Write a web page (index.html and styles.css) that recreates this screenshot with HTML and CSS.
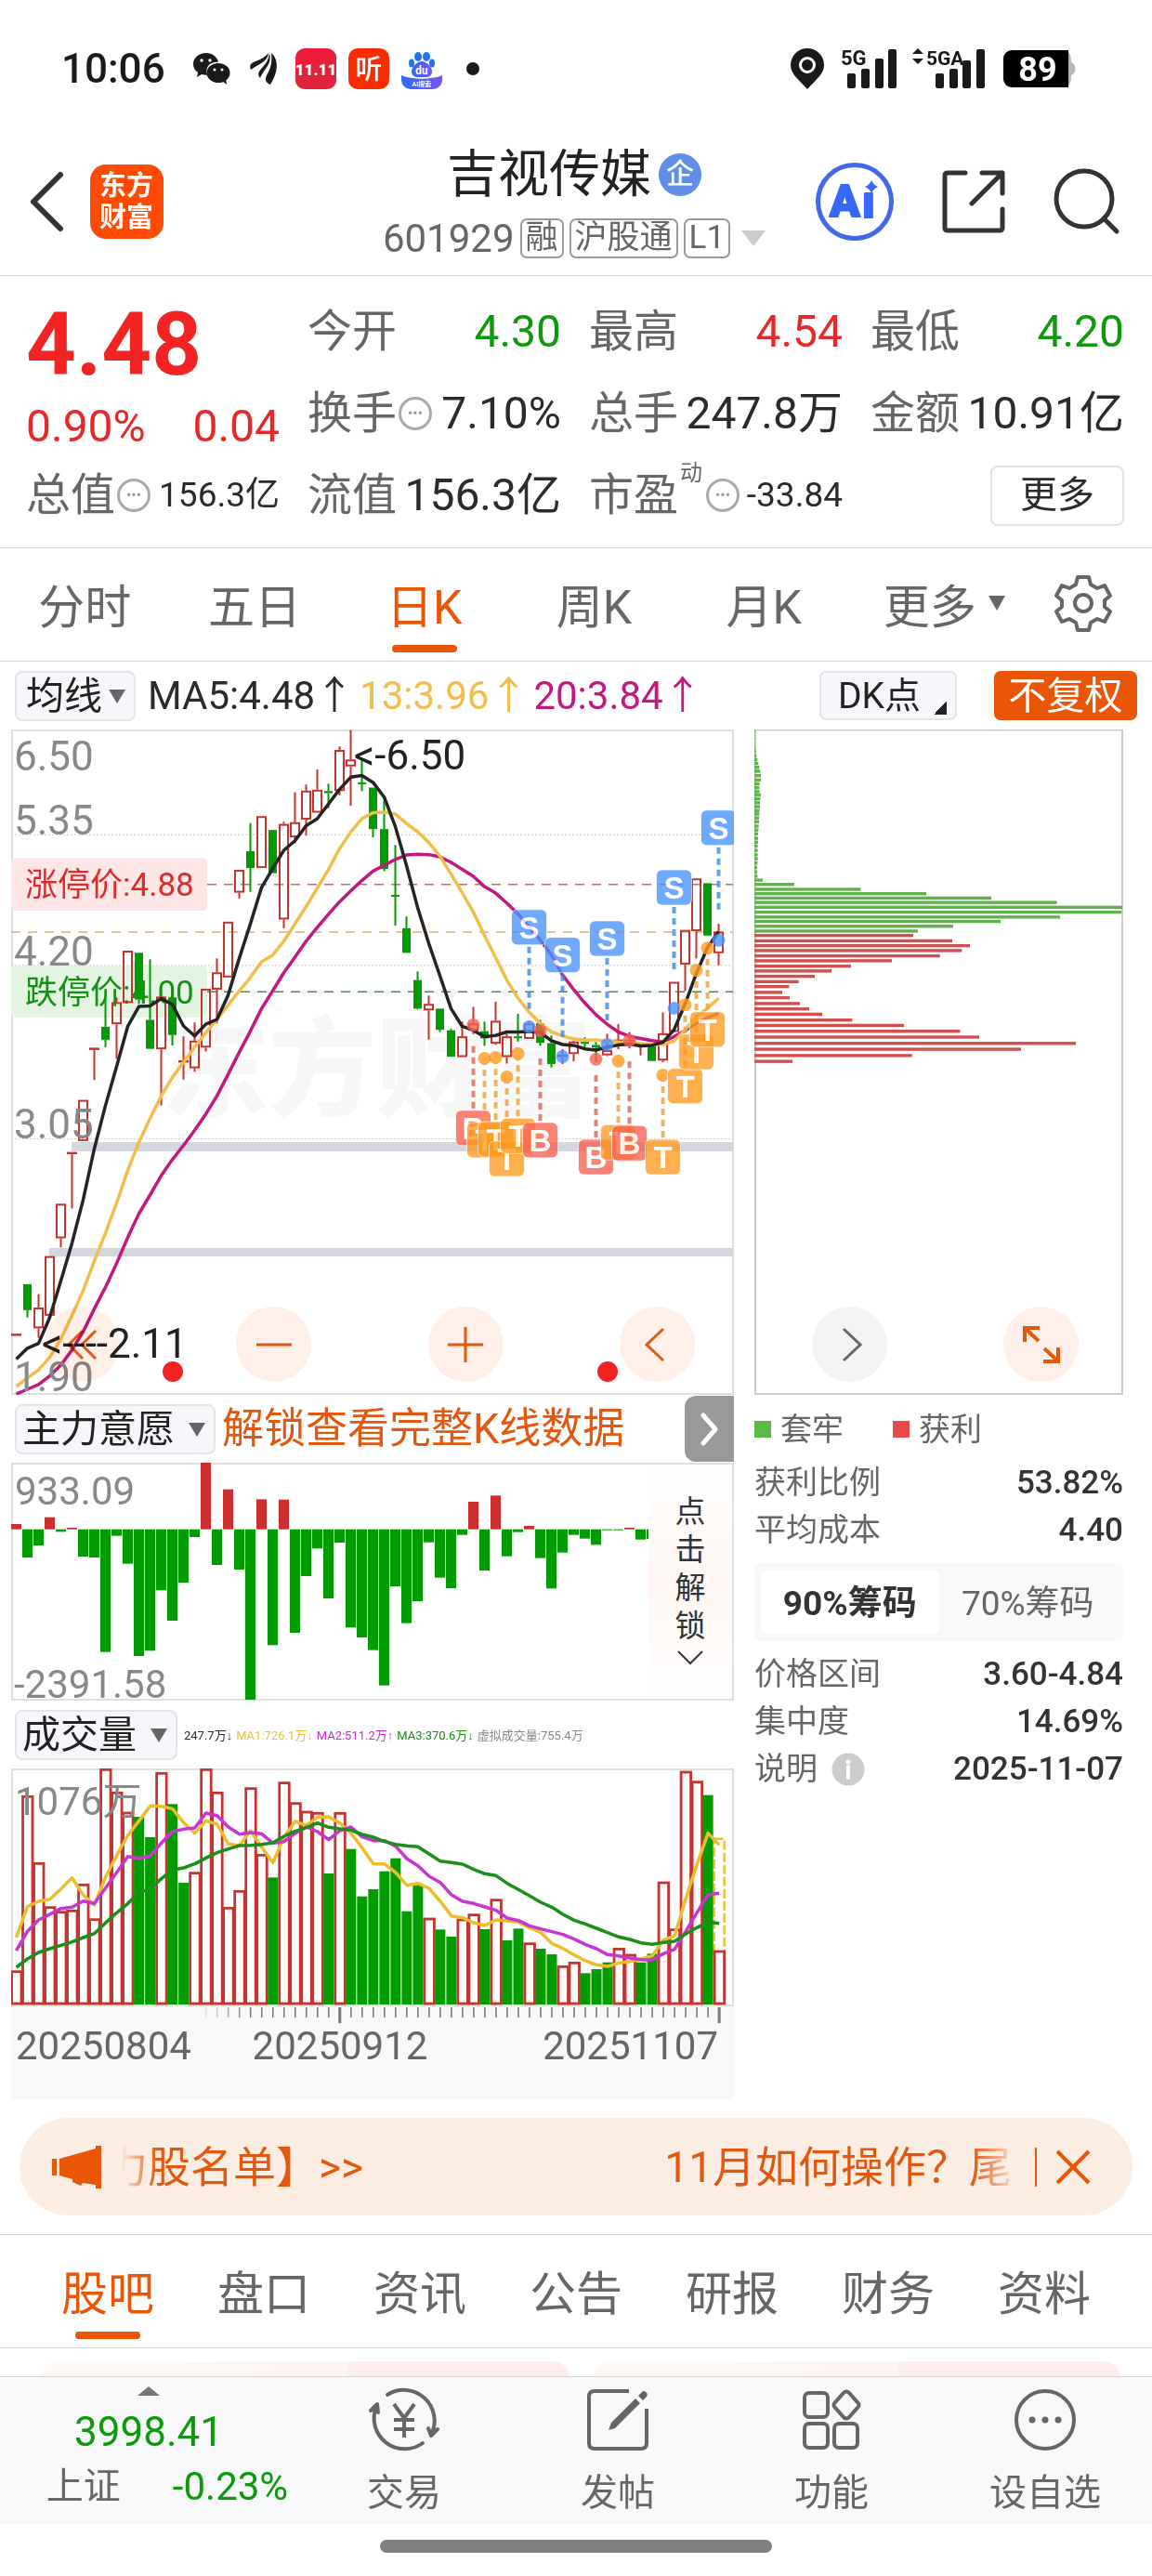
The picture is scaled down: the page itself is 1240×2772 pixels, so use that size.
FILE: index.html
```html
<!DOCTYPE html>
<html lang="zh-CN">
<head>
<meta charset="utf-8">
<meta name="viewport" content="width=device-width, initial-scale=1">
<title>吉视传媒 601929</title>
<link rel="stylesheet" href="styles.css">
<script src="charts.js" defer></script>
</head>
<body>
<div class="status">
  <span class="status-time">10:06</span>
  <svg class="st-wechat" width="40" height="34" viewBox="0 0 40 34"><path fill="#1a1a1a" d="M14 0C6 0 0 5 0 12c0 4 2 7 5 9l-1 5 5-3c2 .6 4 .8 6 .7C12 14 20 9 27 10 26 4 20 0 14 0z"/><ellipse cx="27" cy="21.500" rx="12.500" ry="10.500" fill="#1a1a1a"/><path fill="#1a1a1a" d="M31 30l5 4-1-6z"/><g fill="#fff"><circle cx="9" cy="8" r="1.700"/><circle cx="18" cy="8" r="1.700"/><circle cx="23" cy="18" r="1.500"/><circle cx="31" cy="18" r="1.500"/></g></svg>
  <svg class="st-wing" width="30" height="36" viewBox="0 0 30 36"><g fill="#1a1a1a"><path d="M1 19C-1 14 1 12 6 10 12 8 17 5 20 1 19 11 9 13 1 19z"/><path d="M11 28c-3-4-2-6 1-10 5-5 8-9 9-17 3 12-5 16-10 27z"/><path d="M22 35c-5-2-6-5-4-10C23 17 24 10 23 1c7 6 9 18-1 34z"/></g></svg>
  <svg class="st-app" width="44" height="44" viewBox="0 0 44 44"><rect width="44" height="44" rx="10" fill="#ee1c3a"/><path d="M0 26l44-20v28a10 10 0 0 1-10 10H10A10 10 0 0 1 0 34z" fill="#d8283c" opacity=".5"/><text x="22" y="29" text-anchor="middle" font-size="17" font-weight="900" fill="#fff">11.11</text></svg>
  <svg class="st-app" width="44" height="44" viewBox="0 0 44 44"><rect width="44" height="44" rx="10" fill="#fb2c02"/><text x="22" y="33" text-anchor="middle" font-size="29" font-weight="500" fill="#fff">听</text></svg>
  <svg class="st-app" width="44" height="44" viewBox="0 0 44 44"><defs><linearGradient id="du"><stop offset="0" stop-color="#2e6bf0"/><stop offset="1" stop-color="#7b55ee"/></linearGradient></defs><g fill="#1f74f2"><ellipse cx="18" cy="9" rx="4" ry="5"/><ellipse cx="27" cy="9" rx="4" ry="5"/><ellipse cx="11" cy="16" rx="3" ry="4.500"/><ellipse cx="33" cy="16" rx="3" ry="4.500"/></g><path fill="url(#du)" d="M22 14c-5 0-11 6-11 11 0 4 3 6 7 6h8c4 0 7-2 7-6 0-5-6-11-11-11z"/><path fill="url(#du)" d="M0 29c12 5 32 5 44 0v5a10 10 0 0 1-10 10H10A10 10 0 0 1 0 34z"/><text x="22" y="28" text-anchor="middle" font-size="12" font-weight="700" fill="#fff">du</text><text x="22" y="41" text-anchor="middle" font-size="7" font-weight="700" fill="#fff">AI搜索</text></svg>
  <span class="st-dot"></span>
  <span class="spacer"></span>
  <svg class="st-pin" width="36" height="44" viewBox="0 0 36 44"><path fill="#1a1a1a" d="M18 0a18 18 0 0 0-18 18c0 9 7 14 18 26 11-12 18-17 18-26A18 18 0 0 0 18 0z"/><circle cx="18" cy="18" r="7.500" fill="#1a1a1a" stroke="#fff" stroke-width="3"/></svg>
  <svg class="st-sig" width="60" height="46" viewBox="0 0 60 46"><text x="0" y="19" font-size="22" font-weight="700" fill="#1a1a1a">5G</text><g fill="#1a1a1a"><rect x="7" y="28" width="9" height="16" rx="2"/><rect x="22" y="23" width="9" height="21" rx="2"/><rect x="37" y="12" width="9" height="32" rx="2"/><rect x="51" y="2" width="9" height="42" rx="2"/></g></svg>
  <svg class="st-sig2" width="78" height="46" viewBox="0 0 78 46"><path fill="#1a1a1a" d="M0 7l6-6 6 6zM0 12h12l-6 6z"/><text x="15" y="19" font-size="21" font-weight="700" fill="#1a1a1a">5GA</text><g fill="#1a1a1a"><rect x="25" y="28" width="9" height="16" rx="2"/><rect x="40" y="23" width="9" height="21" rx="2"/><rect x="54" y="14" width="9" height="30" rx="2"/><rect x="69" y="2" width="9" height="42" rx="2"/></g></svg>
  <svg class="st-bat" width="78" height="40" viewBox="0 0 78 40"><path fill="#b5b5b5" d="M60 0h4c7 0 9 4 9 13 6 2 6 12 0 14 0 9-2 13-9 13h-4z"/><path d="M9 0h61v40H9a9 9 0 0 1-9-9V9a9 9 0 0 1 9-9z"/><text x="37" y="33" text-anchor="middle" font-size="36" font-weight="700" fill="#fff">89</text></svg>
</div>

<header class="head">
  <div class="head-side">
    <button class="icon-btn" aria-label="返回"><svg width="40" height="64" viewBox="0 0 40 64"><path d="M35 3L6 32l29 29" fill="none" stroke="#333" stroke-width="6" stroke-linecap="round" stroke-linejoin="round"/></svg></button>
    <svg class="logo" width="79" height="80" viewBox="0 0 79 80"><rect width="79" height="80" rx="17" fill="#ff4a05"/><g font-size="29" font-weight="700" fill="#fff" text-anchor="middle"><text x="39" y="33">东方</text><text x="39" y="67">财富</text></g></svg>
  </div>
  <div class="head-title">
    <h1>吉视传媒<span class="qi">企</span></h1>
    <div class="code">601929<span class="tag">融</span><span class="tag">沪股通</span><span class="tag">L1</span><i class="tri tri-code"></i></div>
  </div>
  <div class="head-side head-right">
    <button class="icon-btn" aria-label="AI助手"><svg width="84" height="84" viewBox="0 0 84 84"><circle cx="42" cy="42" r="39.500" fill="none" stroke="#4169ea" stroke-width="5"/><g font-size="48" font-weight="900" fill="#3568fb" stroke="#3568fb" stroke-width="2" stroke-linejoin="round"><text x="15" y="58">A</text><text x="50" y="59">ı</text></g><path fill="#3568fb" d="M60 19q2 5 7 7-5 2-7 7-2-5-7-7 5-2 7-7z"/></svg></button>
    <button class="icon-btn" aria-label="分享"><svg width="68" height="68" viewBox="0 0 68 68"><path d="M25 3H6q-3 0-3 3v56q0 3 3 3h56q3 0 3-3V42M43 3h22v22M65 3L32 36" fill="none" stroke="#333" stroke-width="5" stroke-linecap="round" stroke-linejoin="round"/></svg></button>
    <button class="icon-btn" aria-label="搜索"><svg width="72" height="72" viewBox="0 0 72 72"><circle cx="33" cy="33" r="30" fill="none" stroke="#333" stroke-width="5"/><path d="M54 54l14 14" stroke="#333" stroke-width="5" stroke-linecap="round"/></svg></button>
  </div>
</header>

<section class="quote">
  <div class="q price up">4.48</div>
  <div class="q"><span>今开</span><b class="down">4.30</b></div>
  <div class="q"><span>最高</span><b class="up">4.54</b></div>
  <div class="q"><span>最低</span><b class="down">4.20</b></div>
  <div class="q change up"><b>0.90%</b><b>0.04</b></div>
  <div class="q"><span>换手</span><i class="dots">•••</i><b>7.10%</b></div>
  <div class="q"><span>总手</span><b>247.8万</b></div>
  <div class="q"><span>金额</span><b>10.91亿</b></div>
  <div class="q"><span>总值</span><i class="dots">•••</i><b class="small">156.3亿</b></div>
  <div class="q"><span>流值</span><b>156.3亿</b></div>
  <div class="q"><span>市盈</span><sup>动</sup><i class="dots">•••</i><b class="small">-33.84</b></div>
  <div class="q"><button class="more">更多</button></div>
</section>

<nav class="periods">
  <button>分时</button>
  <button>五日</button>
  <button class="on">日K</button>
  <button>周K</button>
  <button>月K</button>
  <button>更多<i class="tri tri-tab"></i></button>
  <button aria-label="设置"><svg width="62" height="62" viewBox="0 0 62 62"><g fill="none" stroke="#666" stroke-width="4" stroke-linejoin="round"><path d="M25 3h12l2 8 7 4 8-3 6 11-6 5v7l6 5-6 11-8-3-7 4-2 8H25l-2-8-7-4-8 3L2 40l6-5v-7l-6-5 6-11 8 3 7-4z"/><circle cx="31" cy="31" r="9"/></g></svg></button>
</nav>

<div class="ma-row">
  <label class="pick"><select aria-label="主图指标"><option>均线</option></select></label>
  <span class="ma5">MA5:4.48↑</span><span class="ma13">13:3.96↑</span><span class="ma20">20:3.84↑</span>
  <span class="spacer"></span>
  <button class="dk">DK点<i></i></button>
  <button class="adjust">不复权</button>
</div>

<main class="charts">
  <div class="col">
    <div class="stage">
      <svg id="kline" viewBox="12 785 778 716"></svg>
      <div class="tools tools-left">
        <button aria-label="最早"><svg width="40" height="40" viewBox="0 0 40 40"><path d="M20 5L5 20l15 15M34 5L19 20l15 15"/></svg></button>
        <button aria-label="缩小"><svg width="40" height="40" viewBox="0 0 40 40"><path d="M1 20h38"/></svg></button>
        <button aria-label="放大"><svg width="40" height="40" viewBox="0 0 40 40"><path d="M1 20h38M20 1v38"/></svg></button>
        <button aria-label="向左"><svg width="40" height="40" viewBox="0 0 40 40"><path d="M27 3L9 20l18 17"/></svg></button>
      </div>
    </div>
    <div class="sub-row">
      <label class="pick pick-wide"><select aria-label="副图指标"><option>主力意愿</option></select></label>
      <a class="unlock" href="#">解锁查看完整K线数据</a>
      <button class="drawer" aria-label="展开"><svg width="24" height="36" viewBox="0 0 24 36"><path d="M5 3l13 15L5 33" fill="none" stroke="#fff" stroke-width="5" stroke-linecap="round" stroke-linejoin="round"/></svg></button>
    </div>
    <div class="stage">
      <svg id="force" viewBox="12 1574 778 256"></svg>
      <button class="veil"><span>点<br>击<br>解<br>锁</span><svg width="28" height="16" viewBox="0 0 28 16"><path d="M1 1l13 13L27 1" fill="none" stroke="#333" stroke-width="2"/></svg></button>
    </div>
    <div class="sub-row">
      <label class="pick pick-wide"><select aria-label="量能指标"><option>成交量</option></select></label>
      <p class="vol-info"><span class="c-ink">247.7万↓</span><span class="c-y">MA1:726.1万↓</span><span class="c-m">MA2:511.2万↑</span><span class="c-g">MA3:370.6万↓</span><span class="c-s">虚拟成交量:755.4万</span></p>
    </div>
    <svg id="volume" viewBox="12 1903 778 356"></svg>
  </div>
  <div class="col">
    <div class="stage">
      <svg id="chips" viewBox="811 785 397 716"></svg>
      <div class="tools tools-right">
        <button class="gray" aria-label="向右"><svg width="40" height="40" viewBox="0 0 40 40"><path d="M13 3l18 17-18 17"/></svg></button>
        <button class="zoom" aria-label="全屏"><svg width="40" height="40" viewBox="0 0 40 40"><path d="M2 17V2h16M2 2l15 14M38 23v15H22M38 38L23 24"/></svg></button>
      </div>
    </div>
    <div class="legend"><span class="trap">套牢</span><span class="gain">获利</span></div>
    <dl class="stats">
      <div><dt>获利比例</dt><dd>53.82%</dd></div>
      <div><dt>平均成本</dt><dd>4.40</dd></div>
    </dl>
    <div class="switch"><button class="on">90%筹码</button><button>70%筹码</button></div>
    <dl class="stats">
      <div><dt>价格区间</dt><dd>3.60-4.84</dd></div>
      <div><dt>集中度</dt><dd>14.69%</dd></div>
      <div><dt>说明<svg width="36" height="36" viewBox="0 0 36 36"><circle cx="18" cy="18" r="17.500" fill="#ccc"/><circle cx="18" cy="10" r="2.500" fill="#fff"/><path d="M18 15v12" stroke="#fff" stroke-width="4" stroke-linecap="round"/></svg></dt><dd>2025-11-07</dd></div>
    </dl>
  </div>
</main>

<aside class="notice">
  <svg width="54" height="46" viewBox="0 0 54 46"><path fill="#e85606" d="M0 14h5v18H0zM8 14L47 3V0h6v46h-6v-4l-14-2-2 3-9-4v-3L8 32z"/></svg>
  <a class="ticker" href="#"><span>力股名单】&gt;&gt;</span><span>11月如何操作？尾</span></a>
  <button class="icon-btn" aria-label="关闭"><svg width="36" height="36" viewBox="0 0 36 36"><path d="M1 1l34 34M35 1L1 35" stroke="#e85606" stroke-width="4"/></svg></button>
</aside>

<nav class="topics">
  <button class="on">股吧</button><button>盘口</button><button>资讯</button><button>公告</button><button>研报</button><button>财务</button><button>资料</button>
</nav>
<div class="cards"><div></div><div></div></div>

<footer class="dock">
  <a class="index down" href="#">
    <i class="tri-up"></i>
    <strong>3998.41</strong>
    <span class="index-row"><em>上证</em><span>-0.23%</span></span>
  </a>
  <a href="#"><svg width="78" height="70" viewBox="0 0 78 70"><g fill="none" stroke="#666" stroke-width="4" stroke-linecap="round" stroke-linejoin="round"><path d="M21 8A33 33 0 0 1 68 51M75 45l-7 7-3-8"/><path d="M59 60A33 33 0 0 1 9 21M3 25l7-7 1 9"/></g><path d="M28 18l11 15 11-15M28 35h22M28 45h22M39 33v21" fill="none" stroke="#666" stroke-width="4"/></svg>交易</a>
  <a href="#"><svg width="70" height="70" viewBox="0 0 70 70"><path d="M47 4H10q-6 0-6 6v50q0 6 6 6h50q6 0 6-6V23" fill="none" stroke="#666" stroke-width="4"/><path fill="#666" d="M25 46l3-8 26-26 5 5-27 27zM57 9l4-4q2-2 4 0 3 2 1 5l-4 4z"/></svg>发帖</a>
  <a href="#"><svg width="70" height="70" viewBox="0 0 70 70"><g fill="none" stroke="#666" stroke-width="4"><rect x="6" y="6" width="25" height="26" rx="5"/><rect x="6" y="39" width="25" height="26" rx="5"/><rect x="38" y="39" width="25" height="26" rx="5"/><path d="M48 6q3-3 6 0l9 10q3 3 0 6l-9 10q-3 3-6 0l-9-10q-3-3 0-6z"/></g></svg>功能</a>
  <a href="#"><svg width="70" height="70" viewBox="0 0 70 70"><circle cx="35" cy="35" r="31" fill="none" stroke="#666" stroke-width="4"/><g fill="#666"><circle cx="21" cy="35" r="3.500"/><circle cx="35" cy="35" r="3.500"/><circle cx="49" cy="35" r="3.500"/></g></svg>设自选</a>
</footer>
<div class="home"><span></span></div>
</body>
</html>
```
FILE: styles.css
```css
* { box-sizing: border-box; }
body { margin: 0; background: #fff; color: #2b2b2b; font-family: Roboto, "Noto Sans CJK SC", sans-serif; }
button, select { font: inherit; color: inherit; background: none; border: 0; padding: 0; margin: 0; }
a { color: inherit; text-decoration: none; }
svg { display: block; flex: none; overflow: visible; }
h1, p, dl, dd { margin: 0; }
i, em { font-style: normal; }
.spacer { flex: 1; }
.up { color: #e62828; }
.down { color: #0a9a0a; }
.icon-btn { display: block; }

/* status bar */
.status { display: flex; align-items: center; height: 148px; padding: 0 82px 0 66px; color: #1a1a1a; }
.status-time { font-size: 44px; font-weight: 500; line-height: 52px; width: 142px; }
.st-wing { margin-left: 21px; }
.st-app { margin-left: 13px; }
.st-wing + .st-app { margin-left: 19px; }
.st-dot { width: 14px; height: 14px; border-radius: 50%; background: #1a1a1a; margin-left: 26px; }
.st-sig { margin-left: 18px; }
.st-sig2 { margin-left: 17px; }
.st-bat { margin-left: 20px; }

/* stock header */
.head { display: grid; grid-template-columns: 1fr auto 1fr; align-items: center; height: 149px; padding: 0 34px 0 30px; border-bottom: 1px solid #d6d6d6; }
.head-side { display: flex; align-items: center; gap: 27px; margin-bottom: 10px; }
.head-right { justify-content: flex-end; gap: 52px; }
.head-title { text-align: center; }
.head-title h1 { display: flex; align-items: center; justify-content: center; gap: 8px; font-size: 55px; font-weight: 400; line-height: 69px; color: #222; }
.qi { width: 46px; height: 46px; border-radius: 50%; background: #5f8fe8; color: #fff; font-size: 30px; line-height: 44px; font-weight: 500; }
.code { display: flex; align-items: center; gap: 6px; font-size: 42px; line-height: 69px; color: #666; }
.tag { height: 43px; padding: 0 4px; border: 2px solid #999; border-radius: 7px; font-size: 35px; line-height: 37px; }
.tri { display: inline-block; border: solid transparent; border-bottom: 0; }
.tri-code { margin-left: 6px; border-width: 17px 13px 0; border-top-color: #ccc; }

/* quote grid */
.quote { display: grid; grid-template-columns: repeat(4, 1fr); grid-auto-rows: 88px; column-gap: 30px; padding: 16px 30px 12px 28px; border-bottom: 1px solid #d6d6d6; font-size: 48px; line-height: 56px; }
.q { display: flex; align-items: center; white-space: nowrap; }
.q span { color: #666; }
.q b { margin-left: auto; font-weight: 400; }
.q .small { font-size: 37px; }
.q.price { padding-top: 28px; font-size: 94px; font-weight: 700; line-height: 88px; color: #f22323; }
.q.change { padding-top: 28px; justify-content: space-between; }
.q.change b { margin: 0; }
.q sup { align-self: flex-start; font-size: 24px; line-height: 32px; padding: 4px 2px 0; color: #666; }
.dots { width: 36px; height: 36px; flex: none; margin: 0 2px; border: 3px solid #aaa; border-radius: 50%; color: #999; font-size: 16px; line-height: 30px; text-align: center; }
.more { margin-left: auto; width: 144px; height: 65px; border: 2px solid #e2e2e2; border-radius: 8px; font-size: 40px; line-height: 56px; }

/* chart period tabs */
.periods { display: grid; grid-template-columns: repeat(5, 183fr) 206fr 94fr; height: 122px; padding-right: 27px; border-bottom: 1px solid #d6d6d6; }
.periods button, .topics button { display: flex; align-items: center; justify-content: center; position: relative; padding-bottom: 4px; font-size: 50px; color: #666; }
.periods .on, .topics .on { color: #e85606; }
.periods .on::after, .topics .on::after { content: ""; position: absolute; left: 50%; bottom: 9px; width: 70px; height: 8px; margin-left: -35px; border-radius: 4px; background: #e85606; }
.tri-tab { margin-left: 13px; border-width: 16px 9px 0; border-top-color: #666; }

/* moving average row */
.ma-row, .sub-row { display: flex; align-items: center; height: 73px; }
.ma-row { padding: 0 16px; font-size: 42px; line-height: 54px; white-space: nowrap; }
.pick { position: relative; flex: none; height: 54px; margin-right: 13px; border: 2px solid #e2e5ea; border-radius: 8px; background: #f6f7fa; font-size: 41px; line-height: 50px; }
.pick select { appearance: none; height: 50px; padding: 0 34px 0 10px; color: #222; }
.pick-wide select { padding: 0 42px 0 6px; }
.pick::after { content: ""; position: absolute; right: 9px; top: 18px; border: solid transparent; border-width: 15px 9px 0; border-top-color: #666; pointer-events: none; }
.ma5, .ma13, .ma20 { margin-right: 6px; }
.ma13 { color: #f3bd4b; }
.ma20 { color: #c2187f; }
.dk, .adjust { height: 53px; border-radius: 7px; font-size: 41px; line-height: 50px; }
.dk { display: flex; width: 148px; padding-left: 18px; border: 2px solid #e2e5ea; background: #f6f7fa; color: #222; font-size: 39px; }
.dk i { margin: 31px 0 0 14px; width: 14px; height: 14px; background: linear-gradient(135deg, transparent 50%, #222 50%); }
.adjust { width: 154px; margin-left: 40px; background: #e85606; color: #fff; }

/* charts */
.charts { display: grid; grid-template-columns: 778fr 397fr; column-gap: 22px; align-items: start; padding: 0 31px 20px 12px; }
.col { min-width: 0; }
.stage { position: relative; }
.stage > svg, #volume { width: 100%; height: auto; overflow: hidden; }
.tools { position: absolute; bottom: 14px; display: flex; justify-content: space-between; mix-blend-mode: multiply; }
.tools-left { left: 36px; right: 42px; }
.tools-right { left: 62px; right: 48px; }
.tools button { display: flex; align-items: center; justify-content: center; width: 81px; height: 81px; border-radius: 50%; background: #fef0e8; }
.tools path { fill: none; stroke: #e2580e; stroke-width: 3; }
.tools .zoom path { stroke-width: 4; }
.tools .gray { background: #f3f3f3; }
.tools .gray path { stroke: #666; }
.sub-row { padding-left: 4px; }
.sub-row .pick { margin-right: 7px; }
.unlock { flex: 1; font-size: 45px; line-height: 60px; white-space: nowrap; color: #e2580e; }
.drawer { display: flex; align-items: center; justify-content: center; width: 53px; height: 71px; border-radius: 12px 0 0 12px; background: #999; }
.veil { position: absolute; top: 2px; right: 2px; bottom: 2px; width: 90px; display: flex; flex-direction: column; align-items: center; justify-content: center; padding-bottom: 6px; background: linear-gradient(#fff, #fdf6f2 50%, #fff); font-size: 33px; line-height: 41px; color: #333; }
.veil svg { margin-top: 6px; }
.vol-info { display: flex; gap: 4px; font-family: Roboto, "Liberation Sans", "Noto Sans CJK SC", sans-serif; font-size: 13px; white-space: nowrap; }
.c-y { color: #eec02e; }
.c-m { color: #c32ccb; }
.c-g { color: #149014; }
.c-s { color: #888; }

/* chip summary */
.legend { display: flex; gap: 53px; height: 69px; padding-top: 4px; font-size: 34px; line-height: 50px; color: #666; }
.legend span { display: flex; align-items: center; gap: 10px; }
.legend span::before { content: ""; width: 18px; height: 18px; background: #5bb946; }
.legend .gain::before { background: #e84a4a; }
.stats { font-size: 34px; line-height: 51px; }
.stats div { display: flex; justify-content: space-between; }
.stats dt { display: flex; align-items: center; gap: 15px; color: #666; }
.stats dd { font-size: 35px; font-weight: 500; color: #333; }
.switch { display: grid; grid-template-columns: 1fr 1fr; height: 84px; margin: 10px 0; padding: 7px; border-radius: 7px; background: #f7f8fa; font-size: 37px; color: #666; }
.switch button { padding-bottom: 5px; }
.switch .on { border-radius: 7px; background: #fff; color: #333; font-weight: 700; }

/* notice */
.notice { display: flex; align-items: center; height: 105px; margin: 0 21px 20px; padding: 0 46px 0 35px; border-radius: 53px; background: #fcede3; }
.ticker { flex: 1; display: flex; justify-content: space-between; overflow: hidden; margin: 0 18px 0 20px; padding-right: 7px; font-size: 46px; line-height: 60px; white-space: nowrap; color: #e2580e; -webkit-mask: linear-gradient(90deg, transparent, #000 40px, #000 calc(100% - 50px), transparent); mask: linear-gradient(90deg, transparent, #000 40px, #000 calc(100% - 50px), transparent); }
.ticker span:first-child { margin-left: -17px; }
.notice .icon-btn { display: flex; align-items: center; height: 42px; padding-left: 21px; border-left: 2px solid #e2580e; }

/* topic tabs */
.topics { display: grid; grid-template-columns: repeat(7, 1fr); height: 123px; padding: 0 32px; border: solid #d6d6d6; border-width: 1px 0; }
.cards { display: grid; grid-template-columns: 1fr 1fr; gap: 27px; height: 30px; padding: 14px 35px 0 45px; }
.cards div { border-radius: 28px 28px 0 0; background: linear-gradient(90deg, #fef8f6, #fef5f2 58%, #fdeeeb 58%); }

/* dock */
.dock { display: grid; grid-template-columns: 32fr repeat(4, 23fr); height: 159px; border-top: 1px solid #d6d6d6; background: #f7f8fa; font-size: 40px; line-height: 56px; color: #666; }
.dock > a { display: flex; flex-direction: column; align-items: center; padding-top: 11px; gap: 16px; }
.dock > .index { gap: 0; padding-top: 10px; }
.tri-up { border: solid transparent; border-width: 0 12px 10px; border-bottom-color: #777; }
.index strong { margin: 11px 0 3px; font-size: 44px; font-weight: 400; }
.index-row { display: flex; gap: 56px; padding-left: 40px; font-size: 42px; }
.index em { font-size: 40px; color: #666; }
.home { display: flex; justify-content: center; padding: 17px 0 25px; }
.home span { width: 34%; height: 14px; border-radius: 7px; background: #808080; }
```
FILE: charts.js
```js
const NS = 'http://www.w3.org/2000/svg';
const RED = '#c23531', GREEN = '#029c02';

function add(parent, tag, attrs, text) {
  const el = document.createElementNS(NS, tag);
  for (const k in attrs) el.setAttribute(k, attrs[k]);
  if (text !== undefined) el.textContent = text;
  parent.appendChild(el);
  return el;
}
const line = (p, x1, y1, x2, y2, stroke, width, dash) =>
  add(p, 'line', { x1, y1, x2, y2, stroke, 'stroke-width': width || 2, 'stroke-dasharray': dash || 'none' });
const label = (p, x, y, size, fill, text, extra) =>
  add(p, 'text', Object.assign({ x, y, 'font-size': size, fill }, extra), text);
const curve = (p, pts, stroke, width) =>
  add(p, 'polyline', { points: pts.map(a => a.join()).join(' '), fill: 'none', stroke, 'stroke-width': width, 'stroke-linejoin': 'round' });

/* ---------- daily candles ---------- */
{
  const s = document.getElementById('kline');
  const Y = v => 780 + v * 0.4655;
  const X = i => 17.5 + 12 * i;
  label(s, 173, 1192, 116, '#f7f7f7', '东方财富', { 'font-weight': 900 });
  add(s, 'rect', { x: 13, y: 786, width: 776, height: 714, fill: 'none', stroke: '#dfdfdf', 'stroke-width': 2 });
  [254, 556, 957].forEach(v => line(s, 12, Y(v), 789, Y(v), '#ccc', 1, '2 2'));
  add(s, 'rect', { x: 77, y: 1229, width: 712, height: 10, fill: '#d4d7dd' });
  add(s, 'rect', { x: 53, y: 1343, width: 736, height: 9, fill: '#d4d7dd' });

  add(s, 'rect', { x: 12, y: 923, width: 211, height: 57, rx: 5, fill: '#fee6e6' });
  add(s, 'rect', { x: 12, y: 1039, width: 211, height: 56, rx: 5, fill: '#e3f4e3' });
  line(s, 223, Y(369), 789, Y(369), '#c96a66', 1.5, '10 8');
  line(s, 12, Y(479), 789, Y(479), '#dfae7c', 1.5, '10 8');
  line(s, 223, Y(617), 789, Y(617), '#3b9440', 1.5, '10 8');
  label(s, 27, 964, 35, '#e02a2a', '涨停价:4.88');
  label(s, 27, 1080, 35, '#149014', '跌停价:4.00');

  // direction, high, body top, body bottom, low
  const candles = [
    'r 1410 1410 1412 1412', 'g 1293 1293 1353 1370', 'r 1316 1347 1395 1417', 'r 1228 1228 1366 1366',
    'r 1107 1107 1187 1208', 'r 990 990 993 1118', 'r 867 867 962 962', 'r 747 749 752 821',
    'g 627 698 728 745', 'r 630 641 692 772', 'r 522 522 643 643', 'g 527 527 635 645',
    'g 542 682 749 749', 'r 628 628 750 880', 'g 630 630 717 741', 'r 720 778 783 820',
    'r 688 730 794 802', 'r 610 610 746 755', 'r 540 572 612 690', 'r 455 455 584 584',
    'r 335 335 388 402', 'g 227 292 331 386', 'r 211 211 331 331', 'g 243 243 343 343',
    'r 224 229 450 470', 'r 156 225 260 274', 'r 138 152 219 256', 'r 103 150 203 203',
    'g 136 153 158 193', 'r 50 58 153 163', 'r 12 80 96 187', 'g 80 133 137 153',
    'g 145 145 241 260', 'g 175 241 333 338', 'g 278 393 397 464', 'g 443 470 527 527',
    'g 570 590 656 658', 'r 626 645 660 728', 'g 656 656 705 710', 'g 702 706 767 767',
    'r 686 720 768 768', 'r 652 690 707 715', 'g 686 708 725 742', 'r 640 684 737 740',
    'r 715 720 768 783', 'g 668 720 724 732', 'r 685 690 726 726', 'g 682 690 735 742',
    'g 718 736 784 792', 'r 750 765 769 784', 'r 730 732 761 778', 'g 722 733 737 747',
    'g 733 740 746 780', 'r 714 752 764 766', 'r 692 730 738 750', 'r 710 728 740 748',
    'r 738 738 742 764', 'g 742 742 777 777', 'r 665 713 776 780', 'r 594 594 710 710',
    'r 474 474 554 615', 'r 355 355 477 540', 'g 366 366 487 487', 'r 460 478 528 556'
  ];
  candles.forEach((c, i) => {
    const [d, h, t, b, l] = c.split(' ').map((v, n) => n ? Y(+v) : v);
    const x = X(i), col = d === 'r' ? RED : GREEN;
    line(s, x, h, x, t, col);
    line(s, x, b, x, l, col);
    if (d === 'g') add(s, 'rect', { x: x - 4.5, y: t, width: 9, height: Math.max(b - t, 2), fill: col });
    else if (b - t < 4) line(s, x - 5.5, t, x + 5.5, t, col, 2.5);
    else add(s, 'rect', { x: x - 4.5, y: t + 1, width: 9, height: b - t - 2, fill: 'none', stroke: col, 'stroke-width': 2 });
  });

  const ma20 = [1547,1536,1525,1505,1480,1445,1403,1350,1300,1245,1185,1130,1087,1042,1005,972,937,900,858,808,757,708,656,615,573,537,500,468,438,409,384,360,338,325,311,301,299,300,305,318,334,350,374,389,412,437,467,497,532,578,612,643,670,692,710,720,725,730,733,721,707,690,677,667];
  const ma13 = [1529,1510,1491,1462,1420,1365,1308,1240,1175,1105,1030,965,910,858,815,780,745,712,681,648,615,584,548,532,500,460,420,378,335,286,248,217,203,202,206,228,247,272,303,345,388,433,487,538,590,632,664,690,710,719,726,729,728,731,733,734,737,739,739,731,705,675,655,632];
  const ma5 = [1466,1441,1430,1370,1285,1198,1098,980,880,790,697,651,650,633,646,696,719,692,681,625,540,460,376,332,290,268,233,217,183,149,121,117,133,167,235,325,422,505,580,656,697,706,721,718,710,710,709,711,730,739,741,749,752,745,740,738,742,741,734,705,645,575,515,478];
  [[ma20, '#c2187f'], [ma13, '#f3bd4b'], [ma5, '#242424']].forEach(([m, c]) =>
    curve(s, m.map((v, i) => [X(i), Y(v)]), c, 3.5));

  // trade marks: kind, candle, dot level, box level
  const inks = { S: ['#4793ff', '#3f87e6'], B: ['#fb5f4f', '#d9635a'], T: ['#ff9a1f', '#e8a33a'] };
  'B41 694 932,T42 771 960,T43 769 958,T44 814 1003,T45 760 950,S46 698 468,B47 707 960,S49 767 532,B52 773 999,S53 739 494,T54 777 965,B55 730 967,T58 810 999,S59 655 376,T60 647 835,T61 567 756,T62 516 704,S63 498 238'
    .split(',').forEach(m => {
      const [id, dot, box] = m.split(' ');
      const k = id[0], x = X(+id.slice(1)), yd = Y(+dot), yb = Y(+box), up = yb < yd;
      const g = add(s, 'g', {});
      line(g, x, up ? yb + 21 : yb - 21, x, up ? yb + 88 : Math.max(yd + 6, yb - 88), inks[k][1], 4, '7 5').setAttribute('opacity', .8);
      add(g, 'circle', { cx: x, cy: yd, r: 7, fill: inks[k][0], opacity: .8 });
      const b = add(g, 'g', { opacity: .85 });
      add(b, 'rect', { x: x - 19, y: yb - 19, width: 38, height: 38, rx: 6, fill: inks[k][0], 'fill-opacity': .92, stroke: '#fff', 'stroke-opacity': .7 });
      label(b, x, yb + 12, 33, '#fff', k, { 'font-weight': 700, 'text-anchor': 'middle', 'font-family': 'Liberation Sans' });
    });

  [[6.5, 829], [5.35, 898], [4.2, 1039], [3.05, 1225], [1.9, 1497]].forEach(([v, y]) => label(s, 15, y, 44, '#888', v.toFixed(2)));
  label(s, 381, 828, 44, '#222', '<-6.50');
  label(s, 45, 1461, 44, '#222', '<----2.11');
  [186, 654].forEach(cx => add(s, 'circle', { cx, cy: 1476, r: 11, fill: '#f22323' }));
}

/* ---------- chip distribution ---------- */
{
  const s = document.getElementById('chips');
  add(s, 'rect', { x: 812, y: 785.5, width: 395, height: 714.5, fill: 'none', stroke: '#ccc', 'stroke-width': 2 });
  const trapped = '165 65,173 65,181 65,190 65,198 66,207 68,216 70,224 73,232 76,240 79,248 82,257 84,266 84,274 80,282 79,290 80,297 84,305 82,313 81,321 81,329 80,336 79,344 78,352 78,361 77,369 76,377 75,386 75,394 75,402 74,411 74,420 74,428 74,437 73,446 72,455 72,464 73,472 90,481 192,491 406,500 618,509 828,518 1040,528 1251,538 1248,548 1050,557 858,567 705,577 591';
  const profit = '586 576,597 702,607 759,617 733,628 662,638 507,649 375,659 312,670 258,681 206,691 175,703 153,714 177,726 210,737 240,748 282,760 379,771 546,783 727,795 789,808 1101,820 924,833 572,845 186';
  [[trapped, '#62b04f'], [profit, '#d05050']].forEach(([set, fill]) => set.split(',').forEach(r => {
    const [y, w] = r.split(' ').map(Number);
    add(s, 'rect', { x: 811, y: 698.5 + y * .523, width: (w - 63) / 3, height: 3.4, fill });
  }));
}

/* ---------- main force ---------- */
{
  const s = document.getElementById('force');
  const Y = v => 1500 + v / 3, zero = Y(437);
  add(s, 'rect', { x: 13, y: 1575, width: 776, height: 254, fill: 'none', stroke: '#dfdfdf', 'stroke-width': 2 });
  [420,528,489,398,445,432,525,528,833,458,548,846,829,634,732,609,462,222,552,308,567,987,340,811,341,771,588,499,660,480,754,786,827,941,621,740,669,479,593,627,455,348,570,328,524,446,426,530,628,512,455,467,487,439,439,432,470,468]
    .forEach((v, i) => {
      const y = Y(v);
      add(s, 'rect', { x: 12 + 12 * i, y: Math.min(y, zero), width: 11, height: Math.max(Math.abs(y - zero), 1), fill: v < 437 ? '#cf2e2e' : GREEN });
    });
  label(s, 16, 1619, 42, '#888', '933.09');
  label(s, 15, 1827, 42, '#888', '-2391.58');
}

/* ---------- volume ---------- */
{
  const s = document.getElementById('volume');
  const Y = v => 1840 + v / 3, X = i => 17.5 + 12.01 * i;
  add(s, 'rect', { x: 13, y: 1904, width: 776, height: 254, fill: 'none', stroke: '#dfdfdf', 'stroke-width': 2 });
  add(s, 'rect', { x: 12, y: 2159, width: 778, height: 100, fill: '#f7f8fa' });
  const bars = '842r 277r 493r 635r 650r 646r 562r 674r 190r 265r 330r 345g 411g 202r 304g 558g 524r 190r 265r 637r 583r 251r 466r 541g 233r 299r 327r 331r 528g 331r 449g 602g 579g 521g 479g 650g 562g 672r 709g 732g 675r 659r 708g 611r 744g 706g 752r 771g 789g 826r 814r 850g 837g 815g 769r 789r 815g 787g 555r 707r 198r 230r 275g 777r'.split(' ');
  add(s, 'rect', { x: X(63) - 5.5, y: Y(416), width: 11, height: 122, fill: 'none', stroke: '#eec02e', 'stroke-width': 2.5, 'stroke-dasharray': '10 3' });
  bars.forEach((b, i) => {
    const y = Y(parseInt(b, 10)), x = X(i);
    if (b.endsWith('g')) add(s, 'rect', { x: x - 5.5, y, width: 11, height: 2157 - y, fill: GREEN });
    else add(s, 'rect', { x: x - 5, y: y + 1, width: 10.5, height: 2156 - y - 1, fill: '#fff', stroke: RED, 'stroke-width': 2.8 });
  });
  const y5 = [735,635,618,611,578,542,597,630,540,470,405,358,310,311,319,364,398,358,369,433,438,390,443,493,410,360,373,346,345,365,398,445,497,497,525,566,560,576,618,665,671,687,696,678,681,685,703,718,754,770,791,810,823,828,817,812,804,794,743,730,610,500,398,436];
  const m10 = [777,715,678,660,641,637,617,625,575,525,473,479,471,430,393,385,381,333,341,378,401,396,400,430,425,398,378,393,419,390,378,410,422,422,440,480,503,537,557,597,618,625,636,647,672,680,697,707,716,725,740,757,771,790,794,801,806,808,787,773,715,655,597,592];
  const g20 = [831,804,783,771,760,749,735,722,688,655,625,590,577,545,517,510,497,478,461,449,438,437,434,429,408,392,380,365,379,384,388,402,411,425,434,439,442,465,488,493,498,515,529,535,560,580,600,621,637,660,679,691,705,719,733,741,752,757,751,747,723,703,685,689];
  [[y5, '#eebd2a'], [m10, '#c935d0'], [g20, '#1a901a']].forEach(([m, c]) =>
    curve(s, m.map((v, i) => [X(i), Y(v)]), c, 3.5));
  for (let i = 17; i < 64; i++) {
    const major = i === 29 || i === 63;
    line(s, X(i), 2160, X(i), major ? 2177 : 2171, '#777', major ? 3 : 1.5).setAttribute('opacity', Math.min(1, (i - 16) / 5));
  }
  label(s, 16, 1953, 42, '#888', '1076万');
  label(s, 17, 2216, 42, '#666', '20250804');
  label(s, 366, 2216, 42, '#666', '20250912', { 'text-anchor': 'middle' });
  label(s, 773, 2216, 42, '#666', '20251107', { 'text-anchor': 'end' });
}
```
